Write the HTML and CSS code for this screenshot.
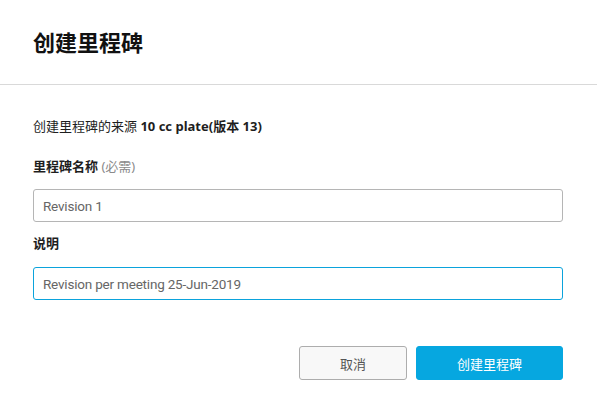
FILE: index.html
```html
<!DOCTYPE html>
<html lang="zh">
<head>
<meta charset="utf-8">
<title>创建里程碑</title>
<link rel="stylesheet" href="styles.css">
</head>
<body>
<div class="dialog">
  <div class="header">
    <h1 class="title">创建里程碑</h1>
  </div>
  <div class="content">
    <p class="source">创建里程碑的来源 <b>10 cc plate(版本 13)</b></p>
    <label class="label label-first">里程碑名称 <span class="req">(必需)</span></label>
    <div class="input">Revision 1</div>
    <label class="label label-second">说明</label>
    <div class="input input-focus">Revision per meeting 25-Jun-2019</div>
    <div class="footer">
      <button class="btn btn-cancel">取消</button>
      <button class="btn btn-primary">创建里程碑</button>
    </div>
  </div>
</div>
</body>
</html>
```

FILE: styles.css
```css
* { box-sizing: border-box; }
html, body {
  margin: 0;
  padding: 0;
  background: #ffffff;
}
body {
  font-family: "Noto Sans", "Noto Sans CJK SC", sans-serif;
  color: #1e1e1e;
  width: 597px;
  height: 415px;
  overflow: hidden;
}
.dialog {
  display: flex;
  flex-direction: column;
}
.header {
  height: 85px;
  border-bottom: 1px solid #d9d9d9;
  padding: 0 34px 0 33px;
  display: flex;
  align-items: center;
}
.title {
  margin: 0;
  font-size: 22px;
  font-weight: 700;
  line-height: 30px;
  color: #111;
  padding-bottom: 1px;
}
.content {
  padding: 31px 34px 0 33px;
  display: flex;
  flex-direction: column;
}
.source {
  margin: 0;
  font-size: 13px;
  line-height: 20px;
  color: #1e1e1e;
}
.source b { font-weight: 700; }
.label {
  display: block;
  font-size: 13px;
  line-height: 20px;
  font-weight: 700;
  color: #1e1e1e;
}
.label-first { margin-top: 20px; margin-bottom: 13px; }
.label-second { margin-top: 11px; margin-bottom: 14px; }
.req {
  font-weight: 400;
  color: #8a8a8a;
}
.input {
  height: 33px;
  border: 1px solid #b5b5b5;
  border-radius: 3px;
  padding: 0 9px;
  display: flex;
  align-items: center;
  font-family: Roboto, "Noto Sans", sans-serif;
  font-size: 13.5px;
  letter-spacing: -0.2px;
  color: #666;
}
.input-focus {
  border-color: #0ba3dc;
}
.footer {
  margin-top: 46px;
  display: flex;
  justify-content: flex-end;
  gap: 9px;
}
.btn {
  height: 34px;
  border-radius: 3px;
  font-family: "Noto Sans", "Noto Sans CJK SC", sans-serif;
  font-size: 13px;
  padding: 0;
  cursor: pointer;
}
.btn-cancel {
  width: 108px;
  background: #f8f8f8;
  border: 1px solid #adadad;
  color: #555;
}
.btn-primary {
  width: 147px;
  background: #06a7e0;
  border: 1px solid #06a7e0;
  color: #ffffff;
}
```
